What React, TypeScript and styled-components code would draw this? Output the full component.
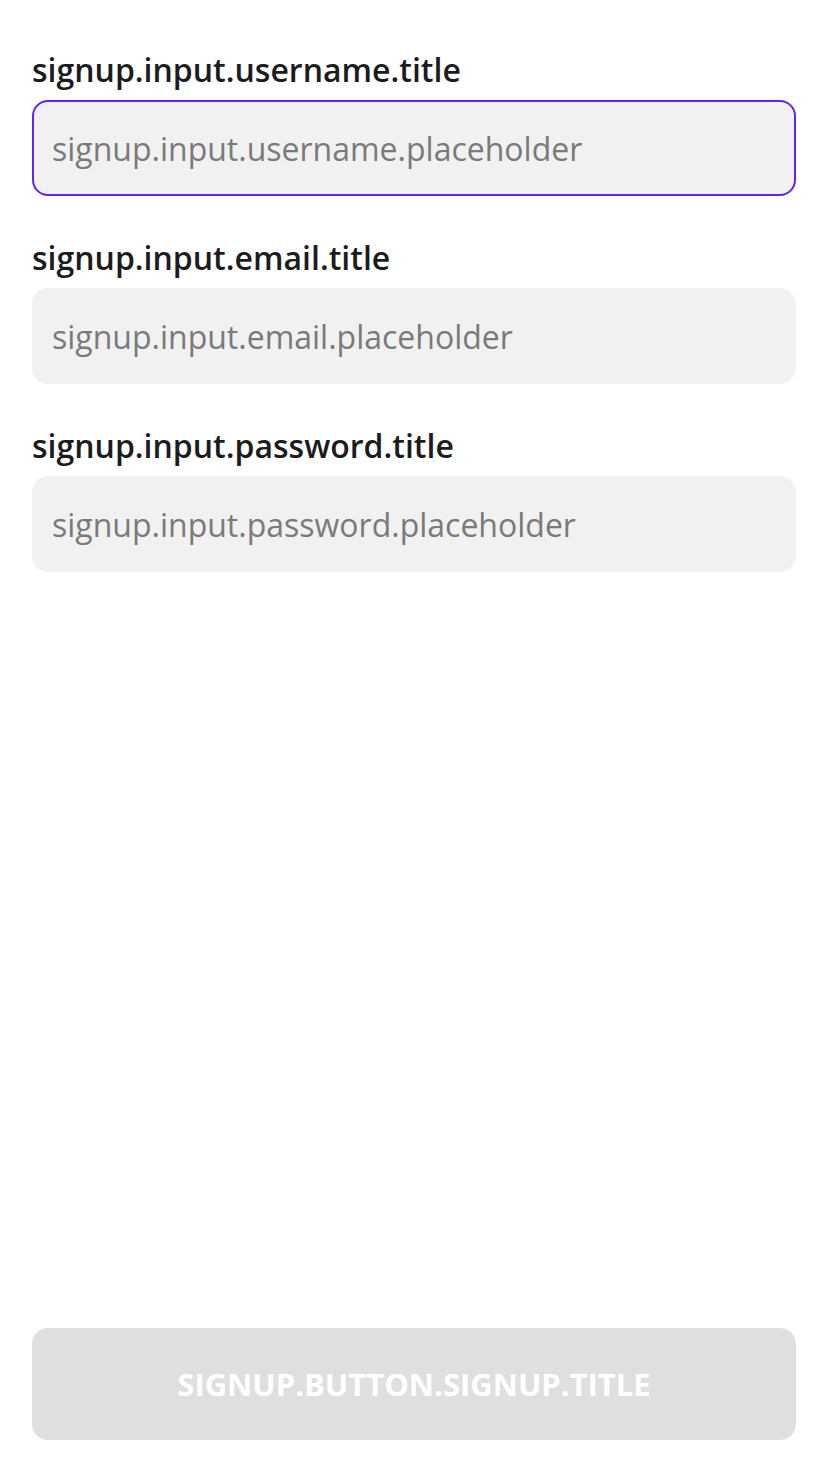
import React from "react";
import styled, { createGlobalStyle } from "styled-components";

const GlobalStyle = createGlobalStyle`
  html, body {
    margin: 0;
    padding: 0;
    background: #ffffff;
  }
  body {
    font-family: "Open Sans", "Noto Sans", sans-serif;
  }
  * { box-sizing: border-box; }
`;

const Page = styled.div`
  min-height: 1472px;
  display: flex;
  flex-direction: column;
  padding: 50px 32px 32px;
`;

const Form = styled.div`
  display: flex;
  flex-direction: column;
  gap: 42px;
`;

const Field = styled.label`
  display: flex;
  flex-direction: column;
  gap: 10px;
`;

const Title = styled.span`
  font-size: 32px;
  line-height: 40px;
  font-weight: 600;
  color: #1c1c1e;
`;

const Input = styled.input<{ $focused?: boolean }>`
  height: 96px;
  width: 100%;
  border-radius: 16px;
  border: 2px solid ${(p) => (p.$focused ? "#6122f5" : "transparent")};
  background: #f1f1f1;
  padding: 0 18px;
  font-family: "Open Sans", "Noto Sans", sans-serif;
  font-size: 32px;
  color: #1c1c1e;
  outline: none;
  &::placeholder {
    color: #7a7a7a;
  }
`;

const Spacer = styled.div`
  flex: 1;
`;

const Button = styled.button`
  height: 112px;
  width: 100%;
  border: none;
  border-radius: 16px;
  background: #dfdfdf;
  color: #ffffff;
  font-family: "Open Sans", "Noto Sans", sans-serif;
  font-size: 31px;
  font-weight: 700;
  text-transform: uppercase;
`;

export default function App() {
  return (
    <>
      <GlobalStyle />
      <Page>
        <Form>
          <Field>
            <Title>signup.input.username.title</Title>
            <Input $focused placeholder="signup.input.username.placeholder" />
          </Field>
          <Field>
            <Title>signup.input.email.title</Title>
            <Input placeholder="signup.input.email.placeholder" />
          </Field>
          <Field>
            <Title>signup.input.password.title</Title>
            <Input type="password" placeholder="signup.input.password.placeholder" />
          </Field>
        </Form>
        <Spacer />
        <Button disabled>signup.button.signup.title</Button>
      </Page>
    </>
  );
}
